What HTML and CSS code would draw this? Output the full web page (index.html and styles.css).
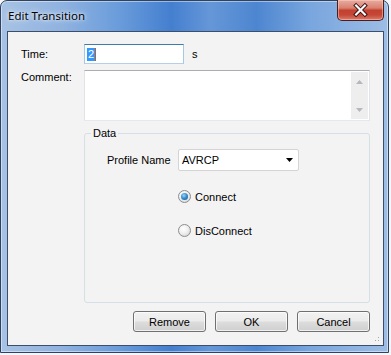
FILE: index.html
```html
<!DOCTYPE html>
<html lang="en">
<head>
    <meta charset="UTF-8">
    <title>Edit Transition</title>
    <link rel="stylesheet" href="styles.css">
</head>
<body>
    <div class="window">
        <div class="titlebar">
            <span class="title">Edit Transition</span>
            <button class="close-btn">
                <svg width="46" height="21" viewBox="0 0 46 21">
                    <path d="M18.5 5.5 L27.5 14.5 M27.5 5.5 L18.5 14.5" stroke="#3b1010" stroke-width="4.2" stroke-linecap="square"/>
                    <path d="M18.5 5.5 L27.5 14.5 M27.5 5.5 L18.5 14.5" stroke="#ffffff" stroke-width="2.2" stroke-linecap="square"/>
                </svg>
            </button>
        </div>

        <div class="client">
            <div class="form-row row-time">
                <label class="field-label">Time:</label>
                <div class="textbox focused"><span class="selected">2</span><span class="caret"></span></div>
                <span class="unit">s</span>
            </div>

            <div class="form-row row-comment">
                <label class="field-label">Comment:</label>
                <div class="textarea">
                    <div class="textarea-body"></div>
                    <div class="vscroll">
                        <svg width="7" height="4" viewBox="0 0 7 4"><path d="M0 4 L3.5 0 L7 4 Z" fill="#b4b7bb"/></svg>
                        <svg width="7" height="4" viewBox="0 0 7 4"><path d="M0 0 L3.5 4 L7 0 Z" fill="#b4b7bb"/></svg>
                    </div>
                </div>
            </div>

            <fieldset class="group">
                <legend>Data</legend>
                <div class="profile-row">
                    <label class="profile-label">Profile Name</label>
                    <div class="combo">
                        <span>AVRCP</span>
                        <svg width="7" height="4" viewBox="0 0 7 4"><path d="M0 0 L7 0 L3.5 4 Z" fill="#000"/></svg>
                    </div>
                </div>
                <div class="radio-list">
                    <label class="radio"><span class="radio-box checked"></span>Connect</label>
                    <label class="radio"><span class="radio-box"></span>DisConnect</label>
                </div>
            </fieldset>

            <div class="buttons">
                <button class="win-btn">Remove</button>
                <button class="win-btn">OK</button>
                <button class="win-btn">Cancel</button>
            </div>

            <div class="grip"></div>
        </div>
    </div>
</body>
</html>
```

FILE: styles.css
```css
/* Base */
* {
    margin: 0;
    padding: 0;
    box-sizing: border-box;
}

body {
    font-family: 'Liberation Sans', Arial, sans-serif;
    font-size: 11px;
    color: #000;
    background-color: #f4f6f9;
    width: 391px;
    height: 355px;
    overflow: hidden;
}

/* Window frame */
.window {
    width: 389px;
    height: 353px;
    border: 1px solid #2f4260;
    border-radius: 7px 7px 0 0;
    padding: 0 4px 6px 6px;
    display: flex;
    flex-direction: column;
    background: linear-gradient(90deg, #a7c2e4 0%, #8fb2e0 16%, #6b9ddb 30%, #447fcf 44%, #6597d8 54%, #4d86d0 66%, #79a6de 80%, #9cbde6 100%);
    box-shadow: inset 0 0 0 1px rgba(255, 255, 255, 0.45);
}

.titlebar {
    height: 30px;
    flex-shrink: 0;
    display: flex;
    align-items: center;
    position: relative;
    padding-left: 1px;
    padding-bottom: 2px;
}

.title {
    font-family: 'Noto Sans', 'Open Sans', sans-serif;
    font-size: 11.5px;
    color: #000;
    text-shadow: 0 0 6px rgba(255, 255, 255, 0.9), 0 0 3px rgba(255, 255, 255, 0.8);
}

.close-btn {
    position: absolute;
    top: -1px;
    right: 0;
    width: 47px;
    height: 21px;
    border: 1px solid #4b1e1a;
    border-top: none;
    border-radius: 0 0 5px 5px;
    background: linear-gradient(180deg, #e8aca2 0%, #d9806f 40%, #c2402f 52%, #c54838 75%, #dc7c6c 100%);
    box-shadow: inset 0 0 0 1px rgba(255, 210, 200, 0.5);
    display: flex;
    align-items: center;
    justify-content: center;
}

/* Client area */
.client {
    flex: 1;
    position: relative;
    border: 1px solid #3d4e66;
    background-color: #f3f3f3;
    padding: 12px 13px 0 13px;
}

.form-row {
    display: flex;
}

.row-time {
    align-items: center;
    height: 20px;
}

.field-label {
    width: 63px;
    flex-shrink: 0;
}

.textbox {
    width: 100px;
    height: 20px;
    background: #fff;
    border: 1px solid #abadb3;
    display: flex;
    align-items: center;
    padding-left: 2px;
}

.textbox.focused {
    border-color: #3d7bad #a4c9e3 #b5cfe7 #a4c9e3;
}

.selected {
    background: #3399ff;
    color: #fff;
    line-height: 13px;
    padding: 0 1px;
}

.caret {
    width: 1px;
    height: 13px;
    background: #c06020;
}

.unit {
    margin-left: 8px;
}

.row-comment {
    margin-top: 6px;
    align-items: flex-start;
}

.row-comment .field-label {
    padding-top: 1px;
}

.textarea {
    width: 286px;
    height: 51px;
    background: #fff;
    border: 1px solid;
    border-color: #abadb3 #e2e3ea #e3e9ef #e2e3ea;
    display: flex;
}

.textarea-body {
    flex: 1;
}

.vscroll {
    width: 17px;
    margin: 1px;
    background-color: #f5f5f5;
    background-image: radial-gradient(#e4e4e4 0.6px, transparent 0.8px);
    background-size: 2px 2px;
    display: flex;
    flex-direction: column;
    justify-content: space-between;
    align-items: center;
    padding: 8px 0 7px;
}

/* Data group */
.group {
    width: 286px;
    height: 176px;
    margin: 6px 0 0 63px;
    border: 1px solid #d5dfe5;
    border-radius: 3px;
    padding: 0;
}

.group legend {
    margin-left: 6px;
    padding: 0 2px;
    line-height: 13px;
}

.profile-row {
    display: flex;
    align-items: center;
    margin-top: 9px;
    padding-left: 22px;
}

.profile-label {
    width: 71px;
}

.combo {
    width: 121px;
    height: 22px;
    background: #fff;
    border: 1px solid #d4d4d4;
    border-radius: 2px;
    display: flex;
    align-items: center;
    justify-content: space-between;
    padding: 0 5px 0 3px;
}

.radio-list {
    display: flex;
    flex-direction: column;
    gap: 21px;
    margin-top: 19px;
    padding-left: 93px;
}

.radio {
    display: flex;
    align-items: center;
    gap: 4px;
    height: 13px;
}

.radio-box {
    width: 13px;
    height: 13px;
    border-radius: 50%;
    border: 1px solid #8b8d8f;
    background: radial-gradient(circle at 40% 35%, #ffffff 0%, #f0f0f0 45%, #c9cbcd 100%);
    display: flex;
    align-items: center;
    justify-content: center;
}

.radio-box.checked::after {
    content: "";
    width: 7px;
    height: 7px;
    border-radius: 50%;
    background: radial-gradient(circle at 40% 35%, #9ad6f8 0%, #3b8fcf 45%, #0d4f8a 100%);
}

/* Buttons */
.buttons {
    display: flex;
    justify-content: flex-end;
    gap: 9px;
    margin-top: 8px;
}

.win-btn {
    width: 73px;
    height: 21px;
    font-family: 'Liberation Sans', Arial, sans-serif;
    font-size: 11px;
    color: #000;
    border: 1px solid #707070;
    border-radius: 3px;
    background: linear-gradient(180deg, #f2f2f2 0%, #ebebeb 48%, #dddddd 52%, #cfcfcf 100%);
    box-shadow: inset 0 0 0 1px rgba(255, 255, 255, 0.7);
}

/* Size grip */
.grip {
    position: absolute;
    right: 2px;
    bottom: 2px;
    width: 10px;
    height: 10px;
    background: radial-gradient(circle, #a3a7ab 0.7px, transparent 1px);
    background-size: 3px 3px;
    clip-path: polygon(100% 0, 100% 100%, 0 100%);
}
```
